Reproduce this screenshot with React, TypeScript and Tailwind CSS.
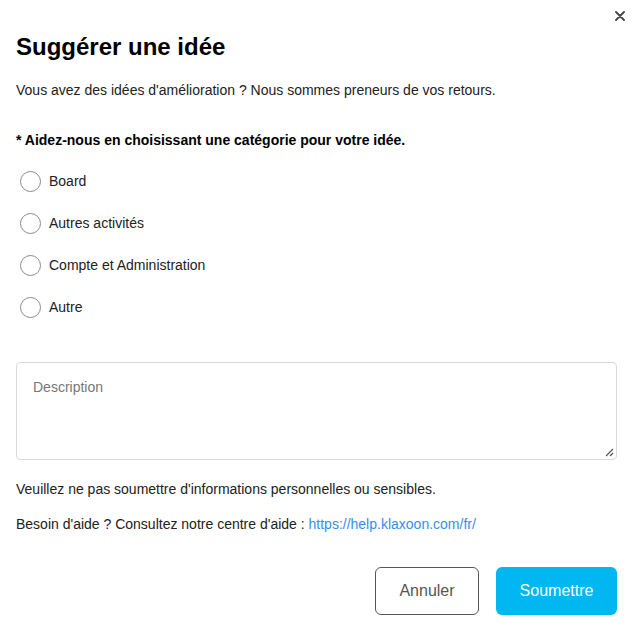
import React from "react";

const options = ["Board", "Autres activités", "Compte et Administration", "Autre"];

export default function App() {
  return (
    <div className="relative w-[632px] h-[630px] bg-white text-[#1a1a1a]" style={{ fontFamily: '"Liberation Sans", Arial, sans-serif' }}>
      <button className="absolute right-[3px] top-[7px] w-[18px] h-[18px] flex items-center justify-center text-[#444]">
        <svg width="10" height="10" viewBox="0 0 10 10">
          <path d="M1 1L9 9M9 1L1 9" stroke="#444" strokeWidth="1.8" strokeLinecap="round" />
        </svg>
      </button>
      <div className="pl-4 pr-[15px] pt-[33px]">
        <h1 className="text-[24px] font-bold leading-[28px] text-black">Suggérer une idée</h1>
        <p className="mt-[19px] text-[14px] leading-[20px] text-[#222]">
          Vous avez des idées d'amélioration ? Nous sommes preneurs de vos retours.
        </p>
        <p className="mt-[30px] text-[14px] leading-[20px] font-bold text-black">
          * Aidez-nous en choisissant une catégorie pour votre idée.
        </p>
        <div className="mt-[21px] flex flex-col gap-[22px]">
          {options.map((o) => (
            <label key={o} className="flex items-center gap-[8px] h-[20px] pl-[4px]">
              <span className="w-[21px] h-[21px] rounded-full border border-[#8a8a8a] bg-white" />
              <span className="text-[14px] text-[#222]">{o}</span>
            </label>
          ))}
        </div>
        <div className="relative mt-[45px] h-[98px] rounded-[4px] border border-[#d9d9d9]">
          <div className="px-4 pt-[14px] text-[14px] text-[#777]">Description</div>
          <svg className="absolute right-[2px] bottom-[2px]" width="10" height="10" viewBox="0 0 10 10">
            <path d="M9 2L2 9M9 6L6 9" stroke="#555" strokeWidth="1.2" />
          </svg>
        </div>
        <p className="mt-[19px] text-[14px] leading-[20px] text-[#222]">
          Veuillez ne pas soumettre d'informations personnelles ou sensibles.
        </p>
        <p className="mt-[15px] text-[14px] leading-[20px] text-[#222]">
          Besoin d'aide ? Consultez notre centre d'aide :{" "}
          <a className="text-[#3a8ee6]">https://help.klaxoon.com/fr/</a>
        </p>
        <div className="mt-[33px] flex justify-end gap-[17px]">
          <button className="w-[104px] h-[48px] rounded-[6px] border border-[#555] text-[16px] text-[#555] bg-white">
            Annuler
          </button>
          <button className="w-[121px] h-[48px] rounded-[6px] bg-[#00b7f1] text-[16px] text-white">
            Soumettre
          </button>
        </div>
      </div>
    </div>
  );
}
